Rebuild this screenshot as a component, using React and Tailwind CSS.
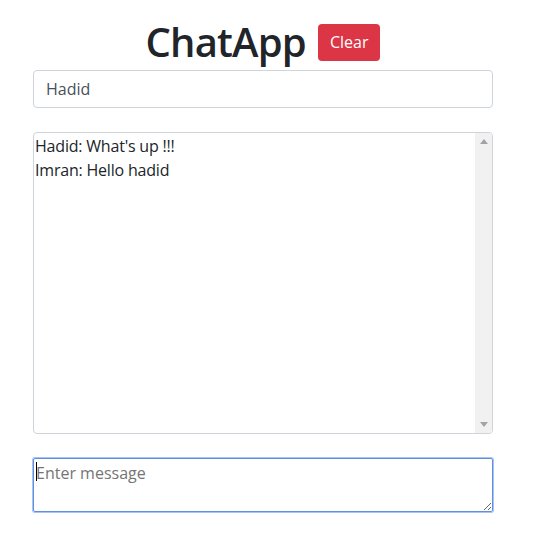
export default function App() {
  const messages = ["Hadid: What's up !!!", "Imran: Hello hadid"];

  return (
    <div className="min-h-[551px] bg-white font-['Open_Sans','Noto_Sans',sans-serif] text-[#212529]">
      <div className="ml-[33px] w-[460px] pt-[18px]">
        <div className="flex items-center justify-center gap-3 h-[48px]">
          <h1 className="text-[40px] leading-[48px] font-semibold tracking-[-0.8px]">ChatApp</h1>
          <button className="h-[37px] px-3 rounded bg-[#dc3545] text-white text-base leading-6">Clear</button>
        </div>

        <input
          type="text"
          defaultValue="Hadid"
          className="mt-[4px] block w-full h-[38px] px-3 border border-[#ced4da] rounded text-base text-[#495057] outline-none"
        />

        <div className="mt-[24px] flex h-[302px] border border-[#ced4da] rounded overflow-hidden">
          <div className="flex-1 pl-[1px] pt-[1px] text-base leading-6 tracking-[-0.2px]">
            {messages.map((m, i) => (
              <div key={i}>{m}</div>
            ))}
          </div>
          <div className="w-[17px] bg-[#f1f1f1] flex flex-col justify-between items-center py-[6px]">
            <svg width="8" height="5" viewBox="0 0 8 5"><path d="M4 0L8 5H0z" fill="#a3a3a3" /></svg>
            <svg width="8" height="5" viewBox="0 0 8 5"><path d="M0 0H8L4 5z" fill="#a3a3a3" /></svg>
          </div>
        </div>

        <div className="relative mt-[24px]">
          <textarea
            placeholder="Enter message"
            className="block w-full h-[54px] px-[2px] py-[2px] border border-[#5f8fe0] ring-1 ring-[#a9c4f2] rounded-[2px] text-base leading-6 outline-none placeholder:text-[#757575]"
          />
          <span className="absolute left-[3px] top-[4px] w-px h-[19px] bg-black" />
        </div>
      </div>
    </div>
  );
}
